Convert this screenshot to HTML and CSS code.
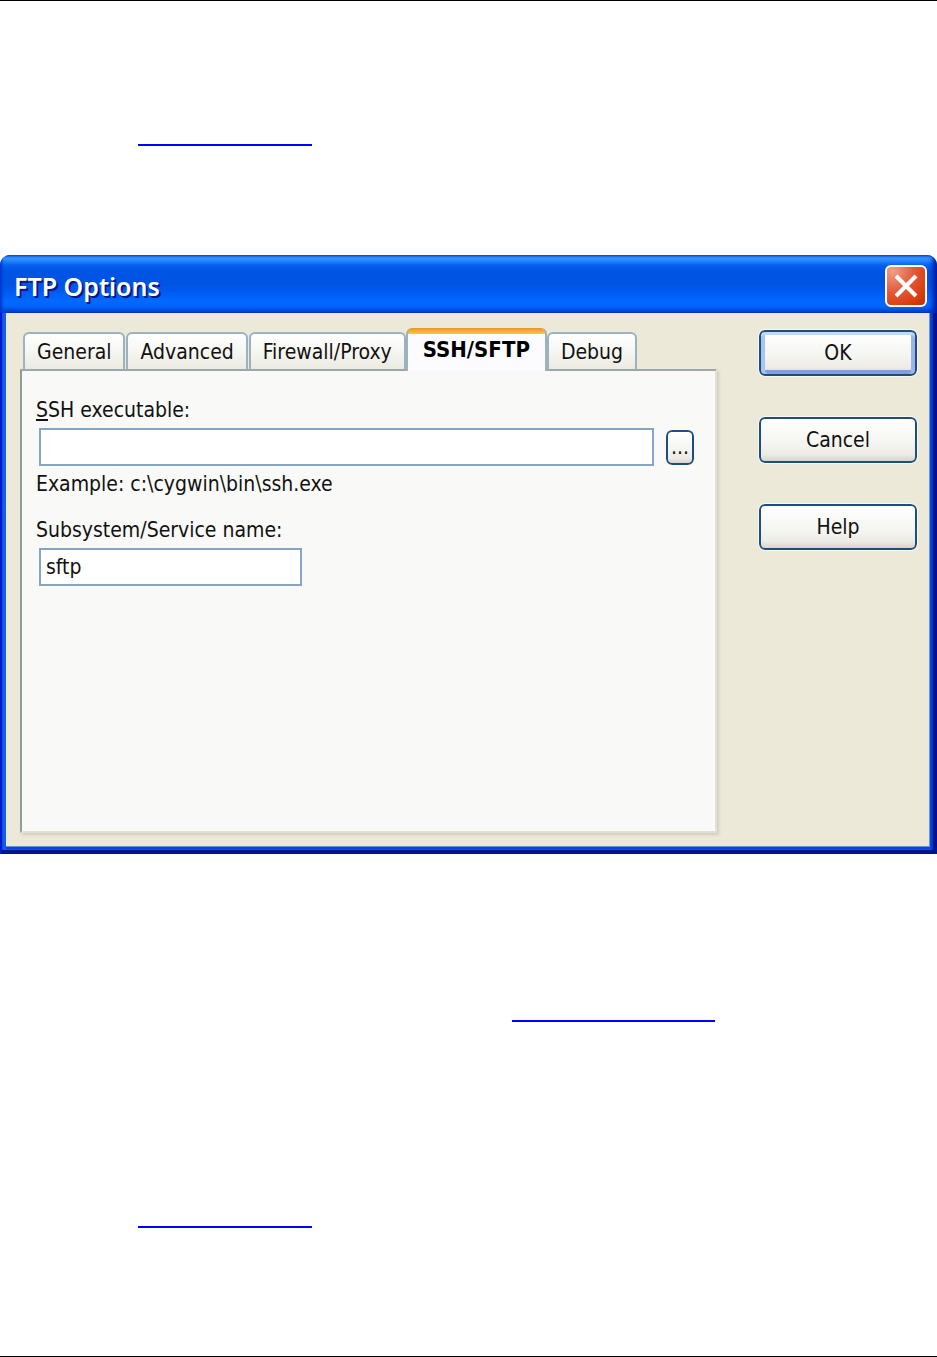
FILE: index.html
```html
<!DOCTYPE html>
<html lang="en">
<head>
	<meta charset="UTF-8">
	<meta name="viewport" content="width=device-width, initial-scale=1.0">
	<title>FTP Options</title>
	<link rel="stylesheet" href="styles.css">
</head>
<body>
	<div class="page">
		<p class="line line-top"><a href="#" class="link" aria-label="Previous topic"></a></p>
		<form class="dialog">
			<div class="title-bar">
				<h1 class="title">FTP Options</h1>
				<button type="button" class="btn-close" aria-label="Close">
					<svg class="icon-close" viewBox="0 0 24 24"><path d="M2 2L22 22M22 2L2 22"/></svg>
				</button>
			</div>
			<div class="content">
				<div class="tab-area">
					<div class="list-tab" role="tablist">
						<button type="button" class="item-tab" role="tab">General</button>
						<button type="button" class="item-tab" role="tab">Advanced</button>
						<button type="button" class="item-tab" role="tab">Firewall/Proxy</button>
						<button type="button" class="item-tab selected" role="tab" aria-selected="true">SSH/SFTP</button>
						<button type="button" class="item-tab" role="tab">Debug</button>
					</div>
					<div class="panel" role="tabpanel">
						<label for="ssh" class="label"><u>S</u>SH executable:</label>
						<div class="row">
							<input type="text" id="ssh" class="text-box">
							<button type="button" class="btn btn-browse" aria-label="Browse">...</button>
						</div>
						<p class="example">Example: c:\cygwin\bin\ssh.exe</p>
						<label for="service" class="label">Subsystem/Service name:</label>
						<div class="row">
							<input type="text" id="service" class="text-box text-short" value="sftp">
						</div>
					</div>
				</div>
				<div class="list-btn">
					<button type="submit" class="btn btn-default">OK</button>
					<button type="button" class="btn">Cancel</button>
					<button type="button" class="btn">Help</button>
				</div>
			</div>
		</form>
		<p class="line line-middle"><a href="#" class="link link-long" aria-label="Related topic"></a></p>
		<p class="line line-bottom"><a href="#" class="link" aria-label="Next topic"></a></p>
	</div>
</body>
</html>
```
FILE: styles.css
```css
*{ box-sizing: border-box;}
body{
	margin: 0; background-color: white; color: #111;
	font-family: "DejaVu Sans Condensed", "Noto Sans", sans-serif; font-size: 21px; line-height: 24px;
}
button, input{ font: inherit; color: inherit;}
.page{
	display: flex; flex-direction: column; min-height: 100vh;
	border-top: 1px solid black; border-bottom: 1px solid black;
}
/* underlined links */
.line{ display: flex; margin: 0;}
.line-top{ padding: 119px 0 109px 138px;}
.line-middle{ padding: 144px 0 0 512px;}
.line-bottom{ padding: 180px 0 0 138px;}
.link{ width: 174px; height: 26px; border-bottom: 2px solid blue;}
.link-long{ width: 203px; height: 24px;}
/* dialog window */
.dialog{
	display: flex; flex-direction: column; min-height: 599px;
	border-radius: 10px 10px 0 0; overflow: hidden; background-color: #0831d9;
	box-shadow: inset 2px 0 #0019cf, inset -4px -4px #00138c;
	padding: 0 7px 7px 6px;
	background-image: linear-gradient(90deg, #0831d9, #166aee 5px, #0855dd 6px, #0855dd calc(100% - 7px), #0041dc calc(100% - 6px), #001ea0);
}
.title-bar{
	display: flex; justify-content: space-between; align-items: center;
	height: 58px; margin: 0 -7px 0 -6px; padding: 4px 10px 0 14px; flex-shrink: 0;
	background: linear-gradient(#0058e6 0, #3a93ff 3px, #2385ff 6px, #0562ee 10px, #0054e3 16px, #0054e3 30px, #005cf5 38px, #0069ff 46px, #0066fc 51px, #0047d8 56px, #003dd7 58px);
	box-shadow: inset 3px 0 3px -1px #0036cc, inset -6px 0 5px -2px #0019a0;
}
.title{
	margin: 0; color: white; font-family: "Noto Sans", sans-serif; font-size: 25px; line-height: 28px; font-weight: 600;
	text-shadow: 2px 2px #0a1883;
}
.btn-close{
	display: flex; align-items: center; justify-content: center; width: 42px; height: 42px; padding: 0;
	border: 2px solid white; border-radius: 6px;
	background: radial-gradient(circle at 15% 10%, #f0a088, #e3593a 45%, #d93b0c 80%, #b83008);
}
.icon-close{ width: 24px; height: 24px; fill: none; stroke: white; stroke-width: 4;}
.content{
	display: flex; flex: 1; gap: 42px; padding: 15px 12px 13px 14px;
	background-color: #ece9d8; border: 1px solid #6b94d8; border-width: 0 1px 1px 0;
	box-shadow: 0 2px #0047e8;
}
.tab-area{ display: flex; flex-direction: column; flex: 1; min-width: 0;}
.list-tab{ display: flex; align-items: flex-end; gap: 1px; height: 41px; padding-left: 3px;}
.item-tab{
	height: 37px; padding: 0 12px; border: 2px solid #9db2c0; border-bottom: 0;
	border-radius: 6px 6px 0 0; background: linear-gradient(#ffffff, #f6f6f2 50%, #ebebe2);
}
.item-tab.selected{
	z-index: 1; height: 43px; margin: 0 -1px -2px; padding: 0 15px; font-size: 22px; font-weight: bold; color: black;
	border-top: 0; background: linear-gradient(#e5962f, #ffc73c 6px, #fcfcfe 6px);
}
.panel{
	flex: 1; padding: 27px 21px 20px 14px; background-color: #f9f9f7;
	border: 2px solid #919b9c; border-color: #9aa8ad #e0e0d6 #e0e0d6 #919b9c;
	box-shadow: 2px 2px 3px #d0cebf;
}
.label{ display: block;}
.row{ display: flex; align-items: center; gap: 12px; padding-left: 3px;}
.label + .row{ margin-top: 6px;}
.text-box{
	flex: 1; min-width: 0; height: 38px; padding: 0 5px;
	border: 2px solid #86a5c4; background-color: white;
}
.text-short{ flex: none; width: 263px;}
.example{ margin: 6px 0 22px;}
.list-btn{ display: flex; flex-direction: column; gap: 41px; width: 158px; padding-top: 2px;}
.btn{
	height: 46px; border: 2px solid #1c4f80; border-radius: 6px; outline: 1px solid #f8f7f2;
	background: linear-gradient(#ffffff, #f4f4f0 60%, #ecebe6 85%, #d8d3c8);
}
.btn-default{ box-shadow: inset 0 3px #c2d8f8, inset 4px 0 #a8c4f2, inset -4px 0 #9ab5ea, inset 0 -4px #7f9fe0;}
.btn-browse{ width: 28px; height: 35px; padding: 0;}
```
